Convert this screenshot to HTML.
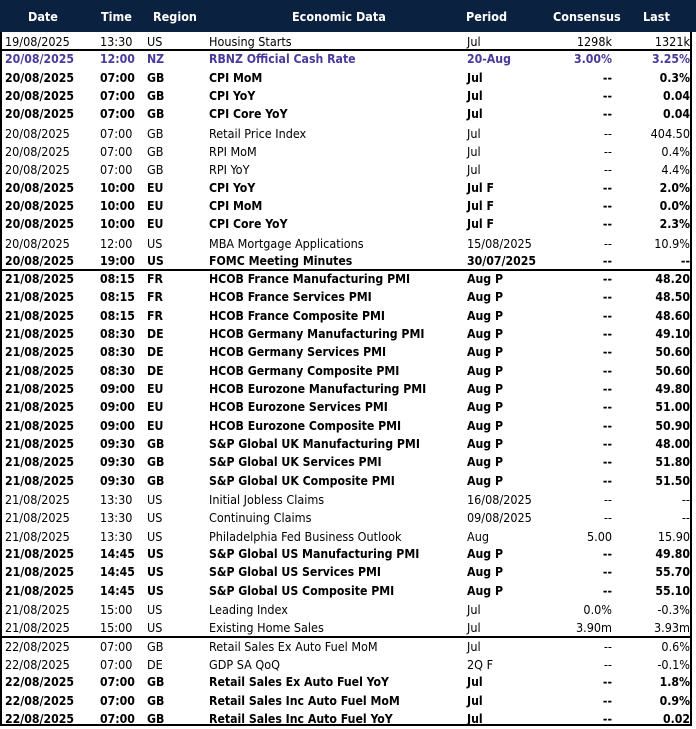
<!DOCTYPE html><html><head><style>
body{margin:0;width:696px;height:728px;background:#fff;font-family:"DejaVu Sans Condensed","Liberation Sans",sans-serif;font-size:12.5px;color:#000;overflow:hidden;position:relative}
.hd{position:absolute;left:0;top:0;width:696px;height:32px;background:#0b2140;color:#fff;font-weight:bold;font-size:12.5px}
.hd span{position:absolute;top:9px}
.frame{position:absolute;left:0;top:32px;width:692px;height:694px;border-left:2px solid #000;border-right:2px solid #000;border-bottom:2px solid #000;box-sizing:border-box}
.r{position:absolute;left:0;width:696px;height:18.3px;line-height:19px;white-space:nowrap}
.r span{position:absolute;top:0}
.c1{left:5px}.c2{left:100px}.c3{left:147px}.c4{left:209px}.c5{left:467px}
.c6{right:84px;text-align:right}.c7{right:6px;text-align:right}
.b{font-weight:bold;font-size:12.2px}.p{font-weight:bold;font-size:12.2px;color:#4a3a9c}
.sep{position:absolute;left:0;width:692px;height:2px;background:#000}
</style></head><body>
<div class="hd"><span style="left:28px">Date</span><span style="left:101px">Time</span><span style="left:153px">Region</span><span style="left:292px">Economic Data</span><span style="left:466px">Period</span><span style="left:553px">Consensus</span><span style="left:643px">Last</span></div>
<div class="frame"></div>
<div id="rows"></div>
<script>
const R=[
["n","19/08/2025","13:30","US","Housing Starts","Jul","1298k","1321k"],
["p","20/08/2025","12:00","NZ","RBNZ Official Cash Rate","20-Aug","3.00%","3.25%"],
["b","20/08/2025","07:00","GB","CPI MoM","Jul","--","0.3%"],
["b","20/08/2025","07:00","GB","CPI YoY","Jul","--","0.04"],
["b","20/08/2025","07:00","GB","CPI Core YoY","Jul","--","0.04"],
["n","20/08/2025","07:00","GB","Retail Price Index","Jul","--","404.50"],
["n","20/08/2025","07:00","GB","RPI MoM","Jul","--","0.4%"],
["n","20/08/2025","07:00","GB","RPI YoY","Jul","--","4.4%"],
["b","20/08/2025","10:00","EU","CPI YoY","Jul F","--","2.0%"],
["b","20/08/2025","10:00","EU","CPI MoM","Jul F","--","0.0%"],
["b","20/08/2025","10:00","EU","CPI Core YoY","Jul F","--","2.3%"],
["n","20/08/2025","12:00","US","MBA Mortgage Applications","15/08/2025","--","10.9%"],
["b","20/08/2025","19:00","US","FOMC Meeting Minutes","30/07/2025","--","--"],
["b","21/08/2025","08:15","FR","HCOB France Manufacturing PMI","Aug P","--","48.20"],
["b","21/08/2025","08:15","FR","HCOB France Services PMI","Aug P","--","48.50"],
["b","21/08/2025","08:15","FR","HCOB France Composite PMI","Aug P","--","48.60"],
["b","21/08/2025","08:30","DE","HCOB Germany Manufacturing PMI","Aug P","--","49.10"],
["b","21/08/2025","08:30","DE","HCOB Germany Services PMI","Aug P","--","50.60"],
["b","21/08/2025","08:30","DE","HCOB Germany Composite PMI","Aug P","--","50.60"],
["b","21/08/2025","09:00","EU","HCOB Eurozone Manufacturing PMI","Aug P","--","49.80"],
["b","21/08/2025","09:00","EU","HCOB Eurozone Services PMI","Aug P","--","51.00"],
["b","21/08/2025","09:00","EU","HCOB Eurozone Composite PMI","Aug P","--","50.90"],
["b","21/08/2025","09:30","GB","S&P Global UK Manufacturing PMI","Aug P","--","48.00"],
["b","21/08/2025","09:30","GB","S&P Global UK Services PMI","Aug P","--","51.80"],
["b","21/08/2025","09:30","GB","S&P Global UK Composite PMI","Aug P","--","51.50"],
["n","21/08/2025","13:30","US","Initial Jobless Claims","16/08/2025","--","--"],
["n","21/08/2025","13:30","US","Continuing Claims","09/08/2025","--","--"],
["n","21/08/2025","13:30","US","Philadelphia Fed Business Outlook","Aug","5.00","15.90"],
["b","21/08/2025","14:45","US","S&P Global US Manufacturing PMI","Aug P","--","49.80"],
["b","21/08/2025","14:45","US","S&P Global US Services PMI","Aug P","--","55.70"],
["b","21/08/2025","14:45","US","S&P Global US Composite PMI","Aug P","--","55.10"],
["n","21/08/2025","15:00","US","Leading Index","Jul","0.0%","-0.3%"],
["n","21/08/2025","15:00","US","Existing Home Sales","Jul","3.90m","3.93m"],
["n","22/08/2025","07:00","GB","Retail Sales Ex Auto Fuel MoM","Jul","--","0.6%"],
["n","22/08/2025","07:00","DE","GDP SA QoQ","2Q F","--","-0.1%"],
["b","22/08/2025","07:00","GB","Retail Sales Ex Auto Fuel YoY","Jul","--","1.8%"],
["b","22/08/2025","07:00","GB","Retail Sales Inc Auto Fuel MoM","Jul","--","0.9%"],
["b","22/08/2025","07:00","GB","Retail Sales Inc Auto Fuel YoY","Jul","--","0.02"]];
let h="";const esc=s=>s.replace(/&/g,"&amp;");
R.forEach((r,i)=>{const t=32+i*18.32;h+=`<div class="r ${r[0]}" style="top:${t}px">`+r.slice(1).map((v,j)=>`<span class="c${j+1}">${esc(v)}</span>`).join("")+"</div>";});
[1,13,33].forEach(i=>{h+=`<div class="sep" style="top:${32+i*18.32-1}px"></div>`});
document.getElementById("rows").innerHTML=h;
</script>
</body></html>
